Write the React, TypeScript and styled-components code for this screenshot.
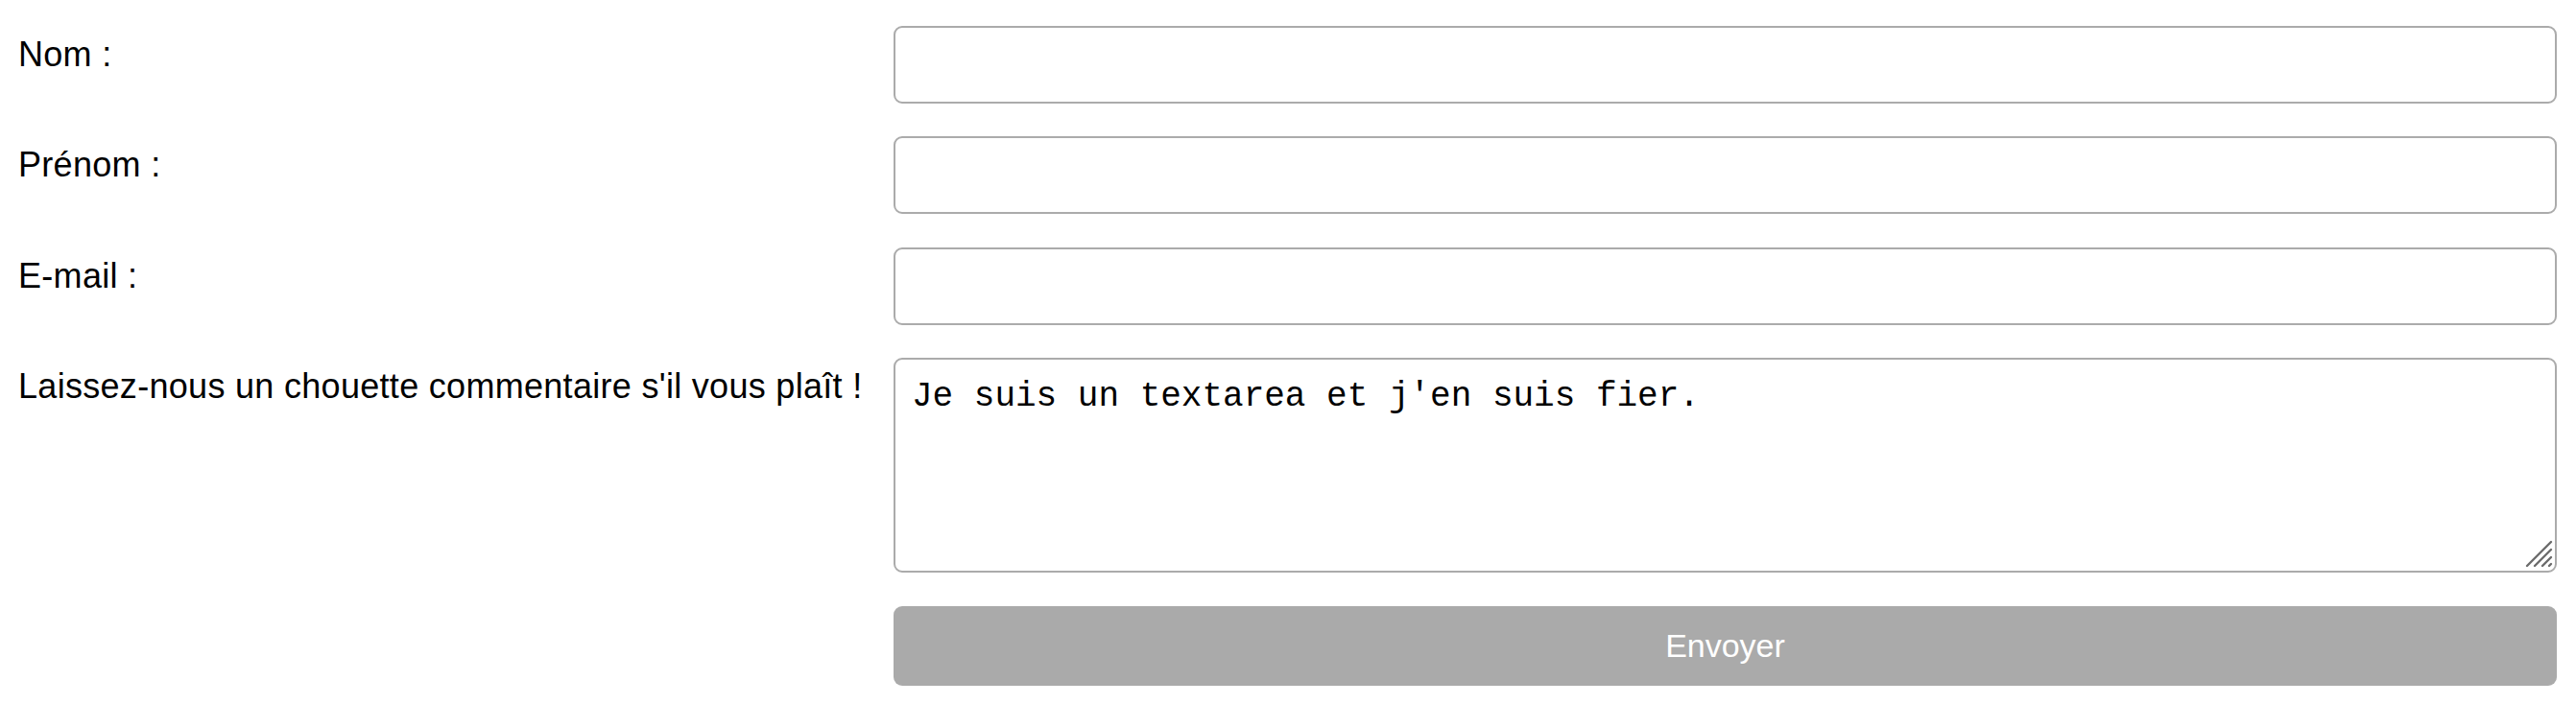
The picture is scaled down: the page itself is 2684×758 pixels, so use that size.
import React from "react";
import styled, { createGlobalStyle } from "styled-components";

const GlobalStyle = createGlobalStyle`
  html, body {
    margin: 0;
    padding: 0;
    background: #ffffff;
  }
  body {
    font-family: "Liberation Sans", Arial, sans-serif;
    color: #000000;
  }
`;

const Form = styled.form`
  display: grid;
  grid-template-columns: 878px 1fr;
  column-gap: 34px;
  row-gap: 34.3px;
  padding: 27px 20px 0 19px;
`;

const Label = styled.label`
  font-family: "Liberation Sans", Arial, sans-serif;
  font-size: 36px;
  letter-spacing: 0.3px;
  line-height: 41px;
  padding-top: 9px;
  color: #000000;
  white-space: nowrap;
`;

const TextInput = styled.input`
  box-sizing: border-box;
  height: 81px;
  width: 100%;
  margin: 0;
  border: 2px solid #ababab;
  border-radius: 9px;
  background: #ffffff;
  padding: 0 17px;
  font-family: "Liberation Sans", Arial, sans-serif;
  font-size: 32px;
  outline: none;
`;

const AreaWrap = styled.div`
  position: relative;
  height: 224px;
`;

const TextArea = styled.textarea`
  box-sizing: border-box;
  display: block;
  width: 100%;
  height: 100%;
  margin: 0;
  border: 2px solid #ababab;
  border-radius: 9px;
  background: #ffffff;
  padding: 18px 17px 17px;
  font-family: "Liberation Mono", "Courier New", monospace;
  font-size: 36px;
  line-height: 41px;
  color: #000000;
  resize: none;
  outline: none;
`;

const Grip = styled.svg`
  position: absolute;
  right: 2px;
  bottom: 3px;
  width: 32px;
  height: 32px;
  pointer-events: none;
`;

const SubmitButton = styled.button`
  grid-column: 2;
  box-sizing: border-box;
  height: 83px;
  margin: 1px 0 0 0;
  border: none;
  border-radius: 9px;
  background: #aaaaaa;
  color: #ffffff;
  font-family: "Liberation Sans", Arial, sans-serif;
  font-size: 34px;
  cursor: pointer;
`;

export default function App() {
  return (
    <>
      <GlobalStyle />
      <Form onSubmit={(e) => e.preventDefault()}>
        <Label htmlFor="nom">Nom :</Label>
        <TextInput id="nom" type="text" />
        <Label htmlFor="prenom">Prénom :</Label>
        <TextInput id="prenom" type="text" />
        <Label htmlFor="email">E-mail :</Label>
        <TextInput id="email" type="email" />
        <Label htmlFor="msg">Laissez-nous un chouette commentaire s'il vous plaît !</Label>
        <AreaWrap>
          <TextArea id="msg" defaultValue="Je suis un textarea et j'en suis fier." />
          <Grip viewBox="0 0 32 32">
            <g stroke="#6b6b6b" strokeWidth="2.4" strokeLinecap="round">
              <line x1="3" y1="28" x2="28" y2="3" />
              <line x1="11" y1="28" x2="28" y2="11" />
              <line x1="19" y1="28" x2="28" y2="19" />
              <line x1="26" y1="28" x2="28" y2="26" />
            </g>
          </Grip>
        </AreaWrap>
        <SubmitButton type="submit">Envoyer</SubmitButton>
      </Form>
    </>
  );
}
